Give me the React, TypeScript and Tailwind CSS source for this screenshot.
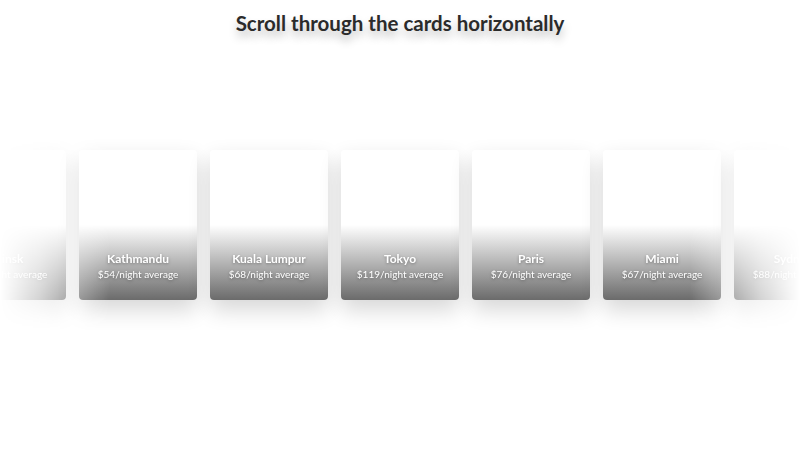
import React from 'react'

type City = { name: string; price: number }

const cities: City[] = [
  { name: 'Minsk', price: 45 },
  { name: 'Kathmandu', price: 54 },
  { name: 'Kuala Lumpur', price: 68 },
  { name: 'Tokyo', price: 119 },
  { name: 'Paris', price: 76 },
  { name: 'Miami', price: 67 },
  { name: 'Sydney', price: 88 },
]

function CityCard({ city }: { city: City }) {
  return (
    <div className="flex h-[150px] w-[118px] shrink-0 flex-col items-center justify-end rounded-[4px] bg-[linear-gradient(to_bottom,#ffffff_50%,#6b6b6b_100%)] pb-[19px] text-white shadow-[0_10px_22px_rgba(0,0,0,0.16)]">
      <div className="text-[12px] leading-[16px] font-bold [text-shadow:0_1px_3px_rgba(0,0,0,0.35)]">{city.name}</div>
      <div className="text-[10px] leading-[14px] [text-shadow:0_1px_3px_rgba(0,0,0,0.35)]">${city.price}/night average</div>
    </div>
  )
}

export default function App() {
  return (
    <div className="grid h-screen grid-cols-[minmax(0,1fr)] grid-rows-[1fr_auto_1fr] overflow-hidden bg-white font-['Lato',sans-serif]">
      <h1 className="pt-[10px] text-center text-[20.5px] leading-[26px] font-bold text-[#2b2b2b] [text-shadow:0_6px_8px_rgba(0,0,0,0.25)]">
        Scroll through the cards horizontally
      </h1>

      {/* card strip, faded toward both edges */}
      <div className="flex min-w-0 justify-center gap-[13px] overflow-hidden py-[30px] [mask-image:linear-gradient(to_right,transparent_0px,rgba(0,0,0,0.3)_40px,black_110px,black_690px,rgba(0,0,0,0.3)_760px,transparent_800px)]">
        {cities.map((c) => (
          <CityCard key={c.name} city={c} />
        ))}
      </div>

      <div />
    </div>
  )
}
